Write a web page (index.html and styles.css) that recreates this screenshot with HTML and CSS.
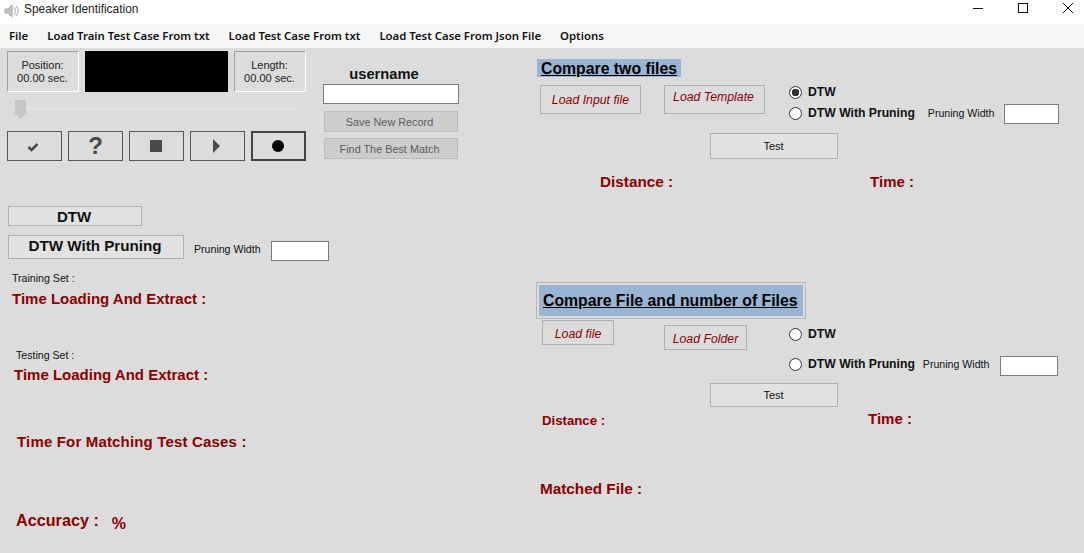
FILE: index.html
```html
<!DOCTYPE html>
<html lang="en">
<head>
<meta charset="utf-8">
<title>Speaker Identification</title>
<link rel="stylesheet" href="styles.css">
</head>
<body>
<div class="window">
  <header class="titlebar">
    <svg class="app-icon" width="16" height="16" viewBox="0 0 16 16"><path d="M1 6h3l4-4v12l-4-4H1z" fill="#c4c4c4" stroke="#a8a8a8"/><path d="M10 4.5c2 2 2 5 0 7M12 3c3 3 3 7 0 10" fill="none" stroke="#bdbdbd" stroke-width="1.4"/></svg>
    <span class="title-text">Speaker Identification</span>
    <div class="win-controls">
      <svg class="win-btn" width="12" height="12" viewBox="0 0 12 12"><path d="M1 6.5h10" stroke="#111" fill="none"/></svg>
      <svg class="win-btn" width="12" height="12" viewBox="0 0 12 12"><rect x="1.5" y="1.5" width="9" height="9" stroke="#111" fill="none"/></svg>
      <svg class="win-btn" width="12" height="12" viewBox="0 0 12 12"><path d="M1 1l10 10M11 1L1 11" stroke="#111" fill="none"/></svg>
    </div>
  </header>
  <nav class="menubar">
    <span>File</span>
    <span>Load Train Test Case From txt</span>
    <span>Load Test Case From txt</span>
    <span>Load Test Case From Json File</span>
    <span>Options</span>
  </nav>
  <main class="form">
    <section class="col-left">
      <div class="top-row">
        <div class="player">
          <div class="info-row">
            <div class="info">Position:<br>00.00 sec.</div>
            <div class="screen"></div>
            <div class="info">Length:<br>00.00 sec.</div>
          </div>
          <div class="slider"><span class="thumb"></span></div>
          <div class="transport">
            <button class="tbtn"><svg class="icon-check" width="12" height="10" viewBox="0 0 12 10"><path d="M1.5 5l3 3 6-6" fill="none" stroke="#4a4a4a" stroke-width="2.6"/></svg></button>
            <button class="tbtn tbtn-q">?</button>
            <button class="tbtn"><svg class="icon" width="12" height="12" viewBox="0 0 12 12"><rect width="12" height="12" fill="#4a4a4a"/></svg></button>
            <button class="tbtn"><svg class="icon" width="7" height="14" viewBox="0 0 7 14"><path d="M0 0l7 7-7 7z" fill="#4a4a4a"/></svg></button>
            <button class="tbtn tbtn-active"><svg class="icon" width="12" height="12" viewBox="0 0 12 12"><circle cx="6" cy="6" r="6" fill="#000"/></svg></button>
          </div>
        </div>
        <div class="record">
          <div class="username">username</div>
          <input class="field field-user" type="text">
          <button class="rbtn">Save New Record</button>
          <button class="rbtn">Find The Best Match</button>
        </div>
      </div>
      <button class="algo algo-dtw">DTW</button>
      <div class="prune-row">
        <button class="algo algo-prune">DTW With Pruning</button>
        <span class="small prune-label">Pruning Width</span>
        <input class="field field-prune" type="text">
      </div>
      <div class="small train-label">Training Set :</div>
      <div class="red train-time">Time Loading And Extract :</div>
      <div class="small test-label">Testing Set :</div>
      <div class="red test-time">Time Loading And Extract :</div>
      <div class="red match-time">Time For Matching Test Cases :</div>
      <div class="accuracy-row">
        <span class="red accuracy">Accuracy :</span>
        <span class="red percent">%</span>
      </div>
    </section>

    <section class="col-right">
      <div class="heading heading-one"><span>Compare two files</span></div>
      <div class="load-row load-row-one">
        <button class="load load-input">Load Input file</button>
        <button class="load load-template">Load Template</button>
        <div class="radios radios-one">
          <label class="radio-line"><span class="radio checked"></span>DTW</label>
          <div class="radio-prune">
            <label class="radio-line"><span class="radio"></span>DTW With Pruning</label>
            <span class="small">Pruning Width</span>
            <input class="field field-small" type="text">
          </div>
        </div>
      </div>
      <button class="test test-one">Test</button>
      <div class="result-row result-one">
        <span class="red res-dist">Distance :</span>
        <span class="red res-time">Time :</span>
      </div>

      <div class="heading-box"><div class="heading heading-two"><span>Compare File and number of Files</span></div></div>
      <div class="load-row load-row-two">
        <button class="load load-file">Load file</button>
        <button class="load load-folder">Load Folder</button>
        <div class="radios radios-two">
          <label class="radio-line"><span class="radio"></span>DTW</label>
          <div class="radio-prune radio-prune-two">
            <label class="radio-line"><span class="radio"></span>DTW With Pruning</label>
            <span class="small">Pruning Width</span>
            <input class="field field-small-two" type="text">
          </div>
        </div>
      </div>
      <button class="test test-two">Test</button>
      <div class="result-row result-two">
        <span class="red res-dist-two">Distance :</span>
        <span class="red res-time-two">Time :</span>
      </div>
      <div class="red matched">Matched File :</div>
    </section>
  </main>
</div>
</body>
</html>
```
FILE: styles.css
```css
* { box-sizing: border-box; }
html, body { margin: 0; padding: 0; }
body { width: 1084px; height: 553px; overflow: hidden; font-family: "Liberation Sans", Arial, sans-serif; background: #dcdcdc; }
button, input { font-family: inherit; margin: 0; padding: 0; display: block; }

.window { display: flex; flex-direction: column; height: 553px; }

.titlebar { height: 24px; background: #fff; display: flex; align-items: center; padding-left: 4px; flex: none; }
.app-icon { margin-right: 4px; margin-top: -2px; }
.title-text { font-size: 11.9px; color: #222; margin-top: -7px; }
.win-controls { margin-left: auto; display: flex; margin-top: -8px; padding-right: 10px; gap: 33px; }
.win-btn { display: block; }

.menubar { height: 24px; background: #f6f6f6; display: flex; align-items: center; gap: 19px; padding: 0 0 2px 9px; flex: none; font-family: "Noto Sans", sans-serif; font-size: 11.36px; font-weight: 600; color: #111; }

.form { flex: 1; display: flex; min-height: 0; background: #dcdcdc; }
.col-left { width: 536px; padding-left: 7px; flex: none; }
.col-right { flex: 1; }

.top-row { display: flex; padding-top: 3px; }
.player { width: 299px; }
.info-row { display: flex; gap: 6px; }
.info { width: 72px; height: 41px; border: 1px solid; border-color: #a0a0a0 #fff #fff #a0a0a0; font-size: 11px; text-align: center; line-height: 13px; padding: 7px 1px 0 0; color: #222; }
.screen { width: 143px; height: 41px; background: #000; }
.slider { height: 19px; margin: 8px 9px 0 8px; position: relative; }
.slider::before { content: ""; display: block; height: 3px; background: #e3e3e3; transform: translateY(7px); }
.thumb { position: absolute; left: 0; top: 0; width: 11px; height: 19px; background: #c6c6c6; clip-path: polygon(0 0, 100% 0, 100% 72%, 50% 100%, 0 72%); }
.transport { display: flex; gap: 6px; margin-top: 12px; }
.tbtn { width: 55px; height: 30px; background: #dcdcdc; border: 1px solid #555; display: flex; align-items: center; justify-content: center; }
.tbtn-q { font-size: 24px; font-weight: 700; color: #4a4a4a; padding-bottom: 1px; }
.tbtn-active { border: 2px solid #444; }
.icon { margin-right: 2px; }
.icon-check { margin: 2px 4px 0 0; }

.record { margin-left: 17px; width: 136px; }
.username { font-size: 14.7px; font-weight: 700; text-align: center; color: #111; padding: 15px 14px 0 0; height: 33px; line-height: 16px; white-space: nowrap; }
.field { background: #fff; border: 1px solid #7a7a7a; }
.field-user { width: 136px; height: 20px; }
.rbtn { width: 134px; height: 21px; margin: 7px 0 0 1px; padding-right: 3px; background: #cdcdcd; border: 1px solid #bcbcbc; color: #5c5c5c; font-size: 10.85px; }
.rbtn + .rbtn { margin-top: 6px; }

.algo { background: #e2e2e2; border: 1px solid #b0b0b0; font-weight: 700; color: #111; margin-left: 1px; }
.algo-dtw { width: 134px; height: 20px; margin-top: 45px; font-size: 15px; padding-right: 2px; }
.prune-row { display: flex; align-items: flex-start; margin-top: 9px; }
.algo-prune { width: 176px; height: 24px; font-size: 15.2px; padding: 0 2px 3px 0; }
.small { font-size: 10.6px; color: #111; white-space: nowrap; }
.prune-label { margin: 7px 0 0 10px; line-height: 14px; }
.field-prune { width: 58px; height: 20px; margin: 6px 0 0 10px; }

.red { color: #8b0000; font-weight: 700; font-size: 15px; line-height: 16px; white-space: nowrap; }
.train-label { margin: 10px 0 0 5px; line-height: 14px; }
.train-time { margin: 6px 0 0 5px; }
.test-label { margin: 41px 0 0 9px; line-height: 14px; }
.test-time { margin: 5px 0 0 7px; }
.match-time { margin: 51px 0 0 10px; letter-spacing: 0.17px; }
.accuracy-row { display: flex; align-items: flex-start; margin: 61px 0 0 9px; }
.accuracy { font-size: 16.2px; line-height: 18px; }
.percent { font-size: 16px; line-height: 18px; margin: 4px 0 0 13px; }

.heading { background: #9ab5d4; font-size: 15.8px; font-weight: 700; color: #000; white-space: nowrap; }
.heading span { text-decoration: underline; }
.heading-one { width: 144px; height: 18px; margin: 11px 0 0 1px; padding-left: 4px; line-height: 20px; }
.load-row { display: flex; align-items: flex-start; }
.load-row-one { margin-top: 8px; height: 48px; }
.load { background: #dcdcdc; border: 1px solid #b0b0b0; color: #8b0000; font-style: italic; font-size: 12.3px; }
.load-input { width: 101px; height: 29px; margin-left: 4px; }
.load-template { width: 101px; height: 29px; margin-left: 23px; padding: 0 2px 5px 0; }
.radios-one { margin: 0 0 0 24px; }
.radio-line { display: flex; align-items: center; font-size: 12.2px; font-weight: 700; color: #111; gap: 6px; height: 14px; white-space: nowrap; }
.radio { width: 13px; height: 13px; border: 1px solid #333; border-radius: 50%; background: #fff; flex: none; display: block; }
.checked { background: radial-gradient(circle, #333 0 3.5px, #fff 4px); }
.radio-prune { display: flex; align-items: center; margin-top: 7px; gap: 13px; height: 14px; }
.field-small { width: 55px; height: 20px; margin-left: -3px; margin-top: 2px; }
.test { background: #e2e2e2; border: 1px solid #b0b0b0; color: #111; font-size: 11px; width: 128px; padding-right: 1px; }
.test-one { height: 26px; margin: 0 0 0 174px; }
.result-row { display: flex; }
.result-one { margin-top: 15px; height: 16px; }
.res-dist { margin-left: 64px; font-size: 15.3px; }
.res-time { margin-left: 197px; }

.heading-box { width: 270px; height: 37px; margin-top: 92px; border: 1px solid #b8b8b8; padding: 2px; }
.heading-two { height: 31px; line-height: 31px; padding-left: 4px; }
.load-row-two { height: 63px; margin-top: 1px; }
.load-file { width: 72px; height: 25px; margin: 0 0 0 6px; padding-top: 2px; }
.load-folder { width: 83px; height: 25px; margin: 5px 0 0 50px; padding-top: 2px; }
.radios-two { margin: 7px 0 0 42px; }
.radio-prune-two { margin-top: 16px; gap: 8px; }
.field-small-two { width: 58px; height: 20px; margin: 3px 0 0 3px; }
.test-two { height: 24px; margin-left: 174px; }
.result-two { margin-top: 3px; height: 24px; }
.res-dist-two { margin: 3px 0 0 6px; font-size: 13.2px; }
.res-time-two { margin: 1px 0 0 263px; }
.matched { margin: 47px 0 0 4px; font-size: 15.3px; }
```
